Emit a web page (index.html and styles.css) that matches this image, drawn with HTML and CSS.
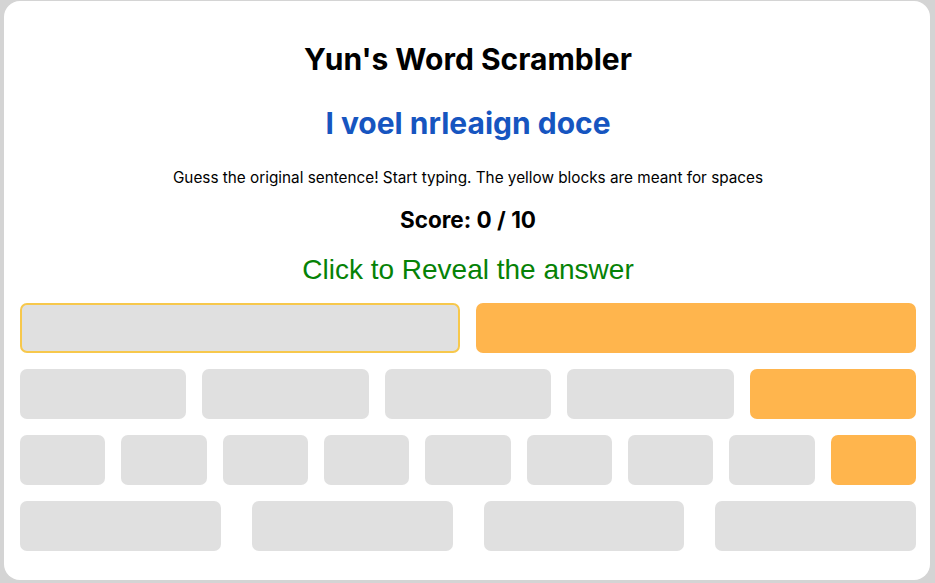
FILE: index.html
```html
<!DOCTYPE html>
<html lang="en">
<head>
<meta charset="utf-8">
<title>Yun's Word Scrambler</title>
<link rel="stylesheet" href="styles.css">
</head>
<body>
<main class="card">
  <h1 class="title">Yun's Word Scrambler</h1>
  <h2 class="scrambled">I voel nrleaign doce</h2>
  <p class="hint">Guess the original sentence! Start typing. The yellow blocks are meant for spaces</p>
  <p class="score">Score: 0 / 10</p>
  <p class="reveal">Click to Reveal the answer</p>
  <div class="board">
    <div class="row">
      <div class="slot active"></div>
      <div class="slot space"></div>
    </div>
    <div class="row">
      <div class="slot"></div>
      <div class="slot"></div>
      <div class="slot"></div>
      <div class="slot"></div>
      <div class="slot space"></div>
    </div>
    <div class="row">
      <div class="slot"></div>
      <div class="slot"></div>
      <div class="slot"></div>
      <div class="slot"></div>
      <div class="slot"></div>
      <div class="slot"></div>
      <div class="slot"></div>
      <div class="slot"></div>
      <div class="slot space"></div>
    </div>
    <div class="row row-last">
      <div class="slot"></div>
      <div class="slot"></div>
      <div class="slot"></div>
      <div class="slot"></div>
    </div>
  </div>
</main>
</body>
</html>
```
FILE: styles.css
```css
html, body {
  margin: 0;
  height: 100%;
}
body {
  background: #d4d4d4;
  padding: 1px 5px 3px 4px;
  box-sizing: border-box;
  font-family: Inter, "Liberation Sans", sans-serif;
  color: #000;
}
.card {
  background: #fff;
  border-radius: 16px;
  height: 579px;
  box-sizing: border-box;
  padding: 16px 14px 29px 16px;
  display: flex;
  flex-direction: column;
  align-items: stretch;
  text-align: center;
}
.title {
  margin: 24px 0 0;
  font-size: 30px;
  line-height: 36px;
  font-weight: 700;
}
.scrambled {
  margin: 28px 0 0;
  font-size: 30px;
  line-height: 36px;
  font-weight: 700;
  color: #1655c0;
}
.hint {
  margin: 27px 0 0;
  font-size: 15.3px;
  line-height: 20px;
}
.score {
  margin: 18px 0 0;
  font-size: 22.5px;
  line-height: 28px;
  font-weight: 700;
}
.reveal {
  margin: 20px 0 0;
  font-family: "Liberation Sans", Arial, sans-serif;
  font-size: 28px;
  line-height: 32px;
  color: #068206;
}
.board {
  margin-top: 17px;
  display: flex;
  flex-direction: column;
  gap: 16px;
}
.row {
  display: grid;
  grid-auto-flow: column;
  grid-auto-columns: 1fr;
  gap: 16px;
}
.row-last {
  gap: 31px;
}
.slot {
  height: 50px;
  box-sizing: border-box;
  background: #e0e0e0;
  border-radius: 7px;
}
.slot.space {
  background: #ffb54d;
}
.slot.active {
  border: 2px solid #f7c84c;
}
```
